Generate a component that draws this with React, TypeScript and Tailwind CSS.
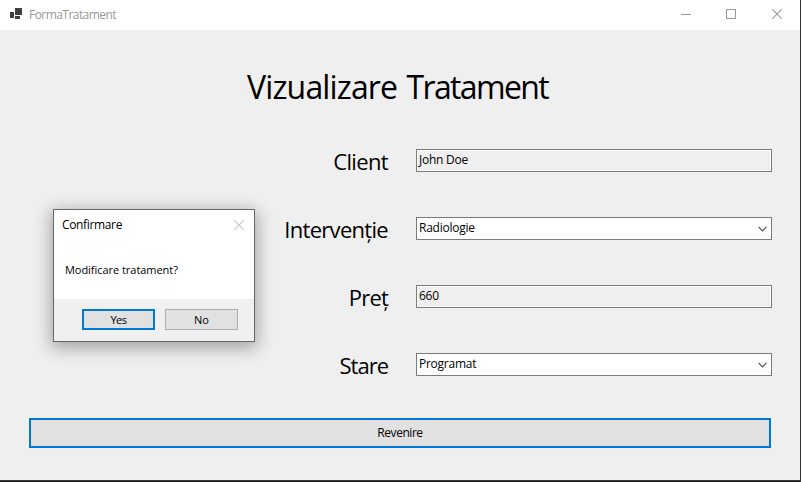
import React from 'react';

type FieldProps = { label: string; value: string; select?: boolean; spacing: string };

function Field({ label, value, select, spacing }: FieldProps) {
  return (
    <div className="flex h-[23px]">
      <div className={`flex w-[389px] shrink-0 items-center justify-end whitespace-nowrap pr-px text-[22px] leading-none text-black ${spacing}`}>
        {label}
      </div>
      <div
        className={`ml-[27px] flex w-[356px] items-center justify-between border border-[#7a7a7a] pr-[4px] pl-[2px] text-[12px] leading-none text-black ${
          select ? 'bg-white' : 'bg-[#efefef] shadow-[inset_0_0_0_1px_#ffffff]'
        }`}
      >
        <span className="mt-[-1px] tracking-[-0.25px]">{value}</span>
        {select && (
          <svg width="9" height="6" viewBox="0 0 9 6" className="mt-[1px]" fill="none" stroke="#555" strokeWidth="1.2">
            <path d="M0.5 0.8 L4.5 4.8 L8.5 0.8" />
          </svg>
        )}
      </div>
    </div>
  );
}

function Cross({ color, size }: { color: string; size: number }) {
  return (
    <svg width={size} height={size} viewBox="0 0 10 10" fill="none" stroke={color} strokeWidth="1.1">
      <path d="M0.2 0.2 L9.8 9.8 M9.8 0.2 L0.2 9.8" />
    </svg>
  );
}

export default function App() {
  return (
    <div className="relative flex h-[482px] w-[801px] flex-col overflow-hidden border-r border-[#333333] bg-[#efefef] font-['Open_Sans','Noto_Sans',sans-serif]">
      <header className="flex h-[30px] shrink-0 items-center bg-white pl-[9px]">
        <svg width="14" height="12" viewBox="0 0 14 12" className="mt-[-3px]" fill="#3f3f41" shapeRendering="crispEdges">
          <rect x="1" y="4" width="4" height="6" />
          <rect x="6" y="0" width="7" height="7" />
          <rect x="6" y="8" width="5" height="3" />
        </svg>
        <span className="ml-[6px] text-[12px] leading-none tracking-[-0.55px] text-[#999999]">FormaTratament</span>
        <div className="ml-auto flex items-center pr-[18px] pb-[2px]">
          <div className="h-px w-[10px] bg-[#999999]" />
          <div className="ml-[35px] h-[10px] w-[10px] border border-[#999999]" />
          <div className="ml-[36px]">
            <Cross color="#999999" size={10} />
          </div>
        </div>
      </header>

      <h1 className="mt-[37px] h-[40px] pl-[247px] text-[32px] leading-[40px] font-normal whitespace-nowrap text-black">
        <span className="tracking-[-0.85px]">Vizualizare</span>{' '}
        <span className="ml-[1px] tracking-[-1.65px]">Tratament</span>
      </h1>

      <main className="mt-[42px] flex flex-col gap-[45px]">
        <Field label="Client" value="John Doe" spacing="tracking-[-0.65px]" />
        <Field label="Intervenție" value="Radiologie" select spacing="tracking-[-0.7px]" />
        <Field label="Preț" value="660" spacing="tracking-[-0.8px]" />
        <Field label="Stare" value="Programat" select spacing="tracking-[-1px]" />
      </main>

      <button className="mt-[42px] ml-[29px] h-[30px] w-[742px] shrink-0 border-2 border-[#0078d7] bg-[#e1e1e1] text-[12px] leading-none text-black">
        <span className="tracking-[-0.45px]">Revenire</span>
      </button>
      <footer className="mt-auto -mr-px h-[2px] shrink-0 border-t border-[#3c3c3c] bg-[#111111]" />

      <section className="absolute top-[209px] left-[53px] flex h-[133px] w-[202px] flex-col border border-[#666666] bg-white text-black shadow-[0_4px_16px_2px_rgba(0,0,0,0.32)]">
        <div className="flex h-[30px] items-center justify-between pr-[10px] pl-[8px]">
          <span className="text-[12px] leading-none tracking-[-0.35px]">Confirmare</span>
          <Cross color="#c8c8c8" size={10} />
        </div>
        <p className="mt-[23px] pl-[11px] text-[11px] leading-[14px] whitespace-nowrap">
          <span className="tracking-[-0.04px]">Modificare tratament?</span>
        </p>
        <div className="mt-auto flex h-[42px] gap-[10px] bg-[#f0f0f0] pt-[10px] pl-[28px]">
          <button className="h-[21px] w-[73px] border-2 border-[#0078d7] bg-[#e1e1e1] text-[11px] leading-none tracking-[-0.5px]">Yes</button>
          <button className="h-[21px] w-[73px] border border-[#adadad] bg-[#e1e1e1] text-[11px] leading-none">No</button>
        </div>
      </section>
    </div>
  );
}
